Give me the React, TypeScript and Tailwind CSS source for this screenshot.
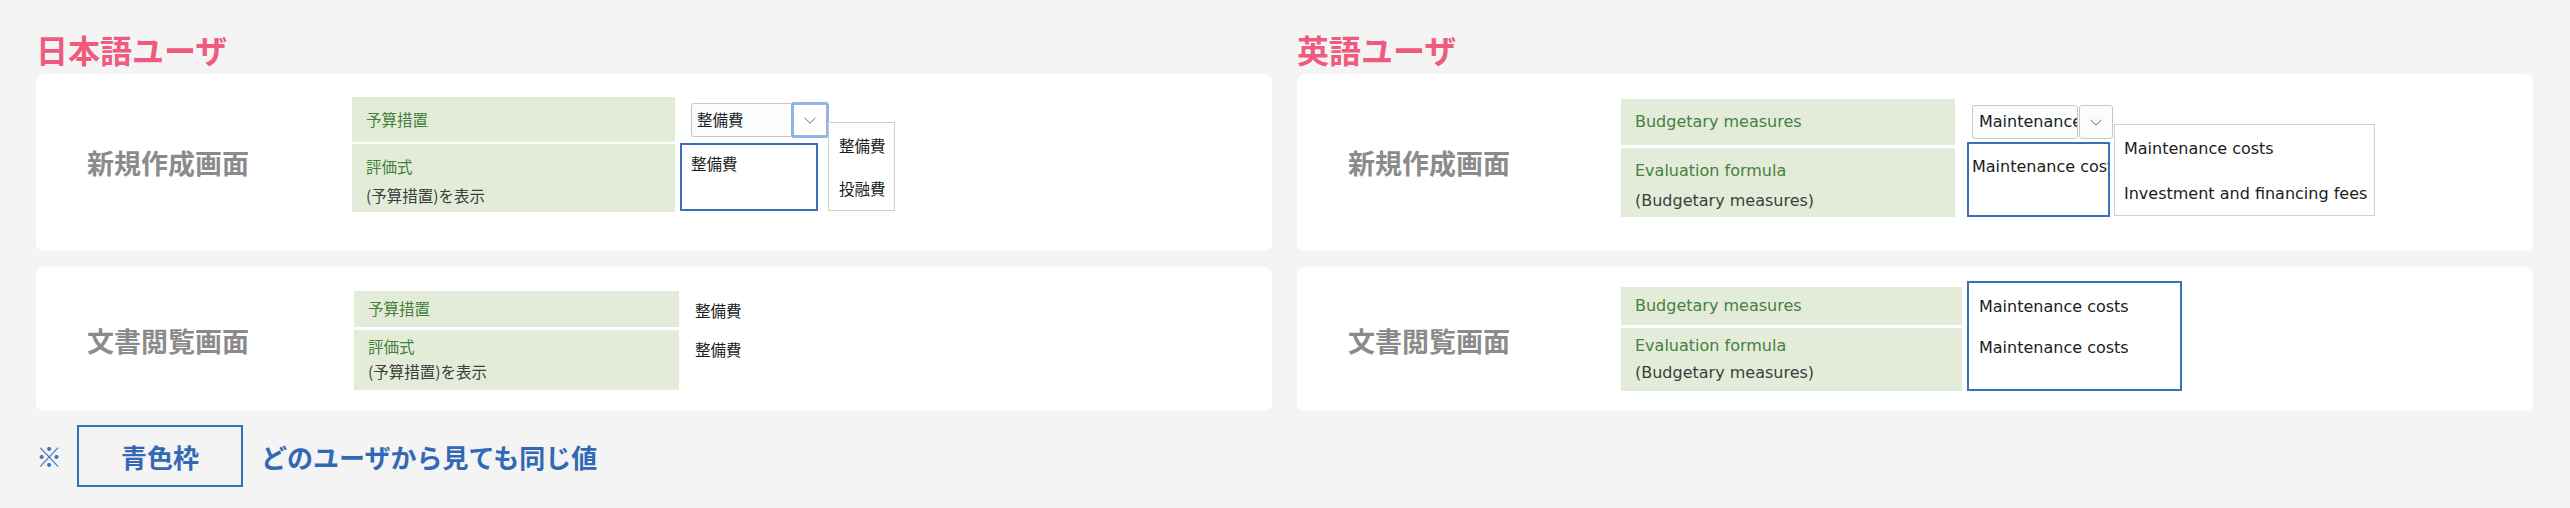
import React from "react"

const jp = { fontFamily: '"Noto Sans CJK JP", "Noto Sans", sans-serif' }
const en = { fontFamily: '"DejaVu Sans", "Noto Sans CJK JP", sans-serif' }

const Chevron = () => (
    <svg width="12" height="7" viewBox="0 0 12 7">
        <path d="M0.5 0.8L6 6.2L11.5 0.8" stroke="#6f6f6f" strokeWidth="1" fill="none" />
    </svg>
)

const CardTitle = ({ text, width }: { text: string; width: string }) => (
    <div className={`${width} flex shrink-0 items-center pl-[51px]`}>
        <span className="text-[27px] font-bold leading-[36px] text-[#8b8b8b]" style={jp}>
            {text}
        </span>
    </div>
)

export default function App() {
    return (
        <div className="min-h-[508px] w-[2570px] bg-[#f4f4f4] px-[36px] pt-[29px]" style={jp}>
            <div className="grid grid-cols-[1236px_1236px] gap-x-[25px]">
                {/* 日本語ユーザ */}
                <section>
                    <h2 className="mb-[5px] text-[32px] font-bold leading-[40px] text-[#ef5b7e]">日本語ユーザ</h2>

                    <div className="flex h-[177px] rounded-[8px] bg-white">
                        <CardTitle text="新規作成画面" width="w-[316px]" />
                        <div className="mt-[23px] flex items-start">
                            <div className="flex w-[323px] flex-col gap-[2px] text-[15.5px]">
                                <div className="flex h-[45px] items-center bg-[#e3ecd9] pl-[14px] text-[#46803f]">予算措置</div>
                                <div className="h-[68px] bg-[#e3ecd9] pl-[14px] pt-[8px] leading-[29px]">
                                    <div className="text-[#46803f]">評価式</div>
                                    <div className="text-[#3d3d3d]">(予算措置)を表示</div>
                                </div>
                            </div>
                            <div className="relative ml-[5px] flex flex-col text-[15.5px] text-[#1c1c1c]">
                                <div className="ml-[11px] mt-[6px] flex">
                                    <div className="flex h-[34px] w-[101px] items-center rounded-l-[3px] border border-[#c6c6c6] bg-[#fbfcfd] pl-[5px]">
                                        整備費
                                    </div>
                                    <div className="-ml-[1px] -mt-[1px] flex h-[36px] w-[38px] items-center justify-center rounded-[3px] border-[3px] border-[#93b3e2] bg-white">
                                        <Chevron />
                                    </div>
                                </div>
                                <div className="mt-[5px] h-[68px] w-[138px] border-2 border-[#3a6fba] pl-[9px] pt-[6px] leading-[24px]">
                                    整備費
                                </div>
                                <div className="absolute left-[148px] top-[25px] h-[89px] w-[67px] border border-[#d0d0d0] bg-white pl-[10px] pt-[1px]">
                                    <div className="leading-[43px]">整備費</div>
                                    <div className="leading-[43px]">投融費</div>
                                </div>
                            </div>
                        </div>
                    </div>

                    <div className="mt-[16px] flex h-[144px] rounded-[8px] bg-white">
                        <CardTitle text="文書閲覧画面" width="w-[318px] pt-[4px]" />
                        <div className="mt-[24px] flex items-start">
                            <div className="flex w-[325px] flex-col gap-[3px] text-[15.5px]">
                                <div className="flex h-[36px] items-center bg-[#e3ecd9] pl-[14px] text-[#46803f]">予算措置</div>
                                <div className="h-[60px] bg-[#e3ecd9] pl-[14px] pt-[4px] leading-[25px]">
                                    <div className="text-[#46803f]">評価式</div>
                                    <div className="text-[#3d3d3d]">(予算措置)を表示</div>
                                </div>
                            </div>
                            <div className="ml-[16px] text-[15.5px] leading-[39px] text-[#1c1c1c]">
                                <div>整備費</div>
                                <div>整備費</div>
                            </div>
                        </div>
                    </div>

                    <div className="mt-[14px] flex items-center">
                        <span className="text-[26px] leading-none text-[#3f74c0]">※</span>
                        <div className="ml-[15px] flex h-[62px] w-[166px] items-center justify-center border-2 border-[#3a6fba] text-[26px] font-bold text-[#3369b4]">
                            青色枠
                        </div>
                        <span className="ml-[18px] text-[26px] font-bold text-[#3369b4]">どのユーザから見ても同じ値</span>
                    </div>
                </section>

                {/* 英語ユーザ */}
                <section>
                    <h2 className="mb-[5px] text-[32px] font-bold leading-[40px] text-[#ef5b7e]">英語ユーザ</h2>

                    <div className="flex h-[177px] rounded-[8px] bg-white">
                        <CardTitle text="新規作成画面" width="w-[324px]" />
                        <div className="mt-[25px] flex items-start" style={en}>
                            <div className="flex w-[334px] flex-col gap-[3px] text-[16px]">
                                <div className="flex h-[46px] items-center bg-[#e3ecd9] pl-[14px] text-[#46803f]">Budgetary measures</div>
                                <div className="h-[69px] bg-[#e3ecd9] pl-[14px] pt-[8px] leading-[30px]">
                                    <div className="text-[#46803f]">Evaluation formula</div>
                                    <div className="text-[#3d3d3d]">(Budgetary measures)</div>
                                </div>
                            </div>
                            <div className="relative ml-[12px] flex flex-col text-[16px] text-[#1c1c1c]">
                                <div className="ml-[5px] mt-[6px] flex gap-[1px]">
                                    <div className="flex h-[34px] w-[106px] items-center overflow-hidden whitespace-nowrap rounded-[3px] border border-[#c6c6c6] bg-[#fbfcfd] pl-[6px]">
                                        Maintenance costs
                                    </div>
                                    <div className="flex h-[34px] w-[34px] items-center justify-center rounded-[3px] border border-[#c6c6c6] bg-[#fbfcfd]">
                                        <Chevron />
                                    </div>
                                </div>
                                <div className="mt-[3px] h-[75px] w-[143px] overflow-hidden whitespace-nowrap border-2 border-[#3a6fba] pl-[3px] pt-[11px] leading-[24px]">
                                    Maintenance costs
                                </div>
                                <div className="absolute left-[147px] top-[25px] h-[92px] w-[261px] border border-[#d0d0d0] bg-white pl-[9px] pt-[1px] whitespace-nowrap">
                                    <div className="leading-[45px]">Maintenance costs</div>
                                    <div className="leading-[45px]">Investment and financing fees</div>
                                </div>
                            </div>
                        </div>
                    </div>

                    <div className="mt-[16px] flex h-[144px] rounded-[8px] bg-white">
                        <CardTitle text="文書閲覧画面" width="w-[324px] pt-[4px]" />
                        <div className="mt-[14px] flex items-start" style={en}>
                            <div className="mt-[6px] flex w-[341px] flex-col gap-[3px] text-[16px]">
                                <div className="flex h-[38px] items-center bg-[#e3ecd9] pl-[14px] text-[#46803f]">Budgetary measures</div>
                                <div className="h-[63px] bg-[#e3ecd9] pl-[14px] pt-[4px] leading-[27px]">
                                    <div className="text-[#46803f]">Evaluation formula</div>
                                    <div className="text-[#3d3d3d]">(Budgetary measures)</div>
                                </div>
                            </div>
                            <div className="ml-[5px] h-[110px] w-[215px] border-2 border-[#3a6fba] pl-[10px] pt-[3px] text-[16px] leading-[41px] text-[#1c1c1c]">
                                <div>Maintenance costs</div>
                                <div>Maintenance costs</div>
                            </div>
                        </div>
                    </div>
                </section>
            </div>
        </div>
    )
}
